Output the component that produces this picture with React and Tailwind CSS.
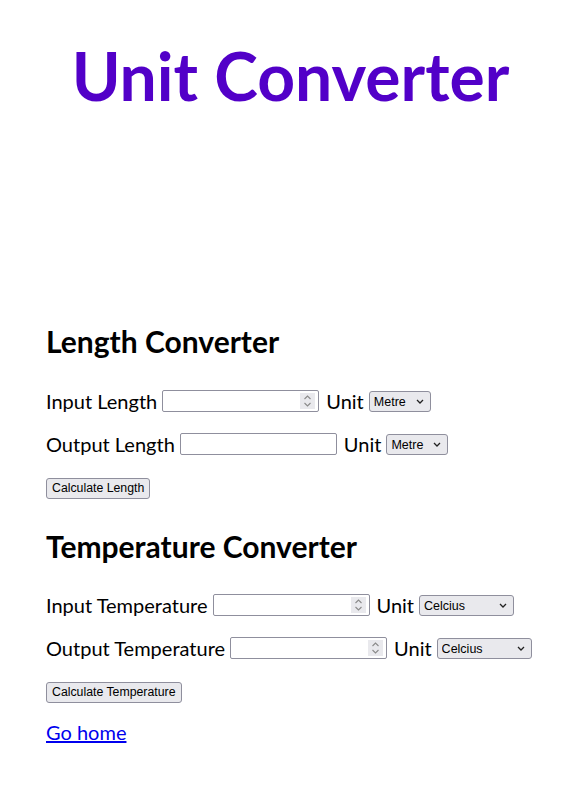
import { useState } from 'react';

const ctrl = { fontFamily: '"Liberation Sans", Arial, sans-serif' };

function NumberBox({ value, onChange, spinner = true }) {
  return (
    <div className="flex h-[22px] w-[157px] items-center rounded-[2px] border border-[#8f8f9d] bg-white pr-[3px]">
      <input
        type="text"
        value={value}
        onChange={(e) => onChange(e.target.value)}
        className="h-full min-w-0 flex-1 bg-transparent px-[2px] text-[13px] outline-none"
        style={ctrl}
      />
      {spinner && (
        <div className="flex h-[16px] w-[15px] flex-col items-center justify-center bg-[#e9e9ed]">
          <svg width="9" height="14" viewBox="0 0 9 14" fill="none" stroke="#8a8a8a" strokeWidth="1.1">
            <path d="M1.5 5 L4.5 2 L7.5 5" />
            <path d="M1.5 9 L4.5 12 L7.5 9" />
          </svg>
        </div>
      )}
    </div>
  );
}

function UnitSelect({ options, value, onChange, width }) {
  return (
    <div className={`flex h-[21px] items-center rounded-[3px] border border-[#8f8f9d] bg-[#e9e9ed] pr-[6px] ${width}`}>
      <select
        value={value}
        onChange={(e) => onChange(e.target.value)}
        className="h-full min-w-0 flex-1 appearance-none bg-transparent pl-[4px] pt-[1px] text-[12.5px] text-black outline-none"
        style={ctrl}
      >
        {options.map((o) => (
          <option key={o}>{o}</option>
        ))}
      </select>
      <svg width="8" height="5" viewBox="0 0 8 5" fill="none" stroke="#222" strokeWidth="1.3">
        <path d="M1 1 L4 4 L7 1" />
      </svg>
    </div>
  );
}

function Row({ label, children }) {
  return <div className="flex h-[30px] items-center gap-[5px] text-[20px]">{label}{children}</div>;
}

function Btn({ children, onClick }) {
  return (
    <button
      onClick={onClick}
      className="h-[21px] rounded-[3px] border border-[#8f8f9d] bg-[#e9e9ed] px-[5px] text-[12.3px] leading-none text-black"
      style={ctrl}
    >
      {children}
    </button>
  );
}

const lengths = { Metre: 1, Kilometre: 1000, Centimetre: 0.01, Millimetre: 0.001, Mile: 1609.344, Foot: 0.3048, Inch: 0.0254 };
const temps = ['Celcius', 'Fahrenheit', 'Kelvin'];

function toC(v, u) {
  if (u === 'Fahrenheit') return ((v - 32) * 5) / 9;
  if (u === 'Kelvin') return v - 273.15;
  return v;
}
function fromC(v, u) {
  if (u === 'Fahrenheit') return (v * 9) / 5 + 32;
  if (u === 'Kelvin') return v + 273.15;
  return v;
}

export default function App() {
  const [lenIn, setLenIn] = useState('');
  const [lenOut, setLenOut] = useState('');
  const [lenU1, setLenU1] = useState('Metre');
  const [lenU2, setLenU2] = useState('Metre');
  const [tIn, setTIn] = useState('');
  const [tOut, setTOut] = useState('');
  const [tU1, setTU1] = useState('Celcius');
  const [tU2, setTU2] = useState('Celcius');

  const calcLength = () => {
    const v = parseFloat(lenIn);
    if (isNaN(v)) return;
    setLenOut(String((v * lengths[lenU1]) / lengths[lenU2]));
  };
  const calcTemp = () => {
    const v = parseFloat(tIn);
    if (isNaN(v)) return;
    setTOut(String(fromC(toC(v, tU1), tU2)));
  };

  return (
    <div className="min-h-screen bg-white text-black" style={{ fontFamily: 'Lato, "Noto Sans", sans-serif' }}>
      <header className="flex h-[323px] justify-center pt-[37px]">
        <h1 className="h-[78px] text-[66px] font-bold leading-[78px] text-[#5200c8]">Unit Converter</h1>
      </header>

      <main className="flex flex-col px-[46px]">
        <h2 className="h-[36px] text-[30px] font-bold leading-[36px]">Length Converter</h2>
        <div className="mt-[27px]">
          <Row label="Input Length">
            <NumberBox value={lenIn} onChange={setLenIn} />
            <span className="ml-[2px]">Unit</span>
            <UnitSelect options={Object.keys(lengths)} value={lenU1} onChange={setLenU1} width="w-[62px]" />
          </Row>
        </div>
        <div className="mt-[13px]">
          <Row label="Output Length">
            <NumberBox value={lenOut} onChange={setLenOut} spinner={false} />
            <span className="ml-[2px]">Unit</span>
            <UnitSelect options={Object.keys(lengths)} value={lenU2} onChange={setLenU2} width="w-[62px]" />
          </Row>
        </div>
        <div className="mt-[14px] flex h-[30px] items-center">
          <Btn onClick={calcLength}>Calculate Length</Btn>
        </div>

        <h2 className="mt-[25px] h-[36px] text-[30px] font-bold leading-[36px]">Temperature Converter</h2>
        <div className="mt-[26px]">
          <Row label="Input Temperature">
            <NumberBox value={tIn} onChange={setTIn} />
            <span className="ml-[2px]">Unit</span>
            <UnitSelect options={temps} value={tU1} onChange={setTU1} width="w-[95px]" />
          </Row>
        </div>
        <div className="mt-[13px]">
          <Row label="Output Temperature">
            <NumberBox value={tOut} onChange={setTOut} />
            <span className="ml-[2px]">Unit</span>
            <UnitSelect options={temps} value={tU2} onChange={setTU2} width="w-[95px]" />
          </Row>
        </div>
        <div className="mt-[14px] flex h-[30px] items-center">
          <Btn onClick={calcTemp}>Calculate Temperature</Btn>
        </div>
        <div className="mt-[10px] flex h-[30px] items-center">
          <a href="#" className="text-[20px] text-[#0000ee] underline">Go home</a>
        </div>
      </main>
    </div>
  );
}
